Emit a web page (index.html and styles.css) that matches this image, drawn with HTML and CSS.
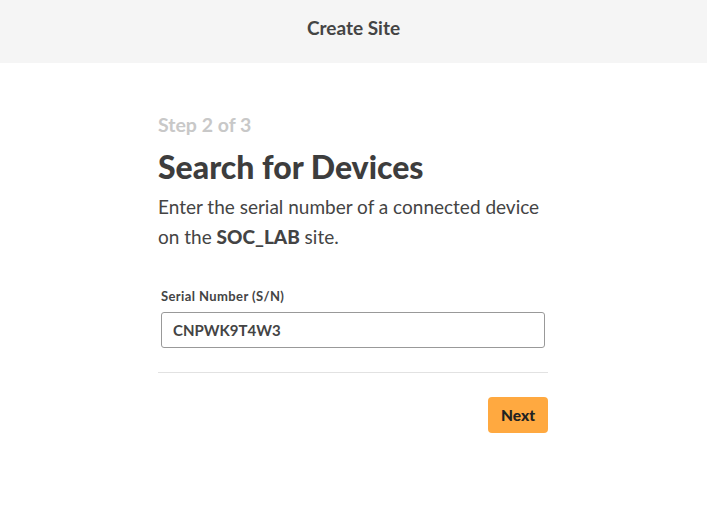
FILE: index.html
```html
<!DOCTYPE html>
<html>
<head>
<meta charset="utf-8">
<link rel="stylesheet" href="styles.css">
</head>
<body>
<header class="top-bar">
  <h1 class="top-title">Create Site</h1>
</header>
<main class="content">
  <div class="panel">
    <div class="step">Step 2 of 3</div>
    <h2 class="heading">Search for Devices</h2>
    <p class="desc">Enter the serial number of a connected device on the <strong>SOC_LAB</strong> site.</p>
    <div class="field">
      <label class="label" for="sn">Serial Number (S/N)</label>
      <input class="input" id="sn" type="text" value="CNPWK9T4W3">
    </div>
    <hr class="divider">
    <div class="actions">
      <button class="btn">Next</button>
    </div>
  </div>
</main>
</body>
</html>
```
FILE: styles.css
```css
* { box-sizing: border-box; }
html, body { margin: 0; padding: 0; background: #fff; }
body {
  font-family: Lato, "Noto Sans", sans-serif;
  color: #444;
  width: 707px;
  height: 510px;
  overflow: hidden;
}
.top-bar {
  height: 63px;
  background: #f5f5f5;
  display: flex;
  align-items: center;
  justify-content: center;
}
.top-title {
  margin: 0 0 8px 0;
  font-size: 19px;
  font-weight: 700;
  color: #444;
}
.content {
  display: flex;
  justify-content: flex-start;
  padding: 50px 0 0 158px;
}
.panel {
  width: 390px;
  display: flex;
  flex-direction: column;
}
.step {
  font-size: 19.5px;
  font-weight: 700;
  color: #c8c8c8;
  line-height: 24px;
}
.heading {
  margin: 11px 0 0 0;
  font-size: 32px;
  font-weight: 900;
  color: #3d3d3d;
  line-height: 38px;
}
.desc {
  margin: 6px 0 0 0;
  font-size: 19px;
  line-height: 30px;
  color: #444;
}
.desc strong { font-weight: 900; }
.field {
  margin-top: 36px;
  padding: 0 3px;
  display: flex;
  flex-direction: column;
}
.label {
  font-size: 13px;
  font-weight: 700;
  letter-spacing: 0.4px;
  color: #444;
  line-height: 16px;
  margin-bottom: 8px;
}
.input {
  height: 36px;
  border: 1px solid #999;
  border-radius: 3px;
  padding: 0 11px;
  font-family: inherit;
  font-size: 15px;
  font-weight: 700;
  color: #444;
  outline: none;
}
.divider {
  margin: 24px 0 0 0;
  border: 0;
  border-top: 1px solid #e2e2e2;
}
.actions {
  display: flex;
  justify-content: flex-end;
  margin-top: 24px;
}
.btn {
  height: 36px;
  padding: 0 13px;
  background: #ffa940;
  border: 0;
  border-radius: 4px;
  font-family: inherit;
  font-size: 15.5px;
  font-weight: 900;
  color: #222;
}
```
